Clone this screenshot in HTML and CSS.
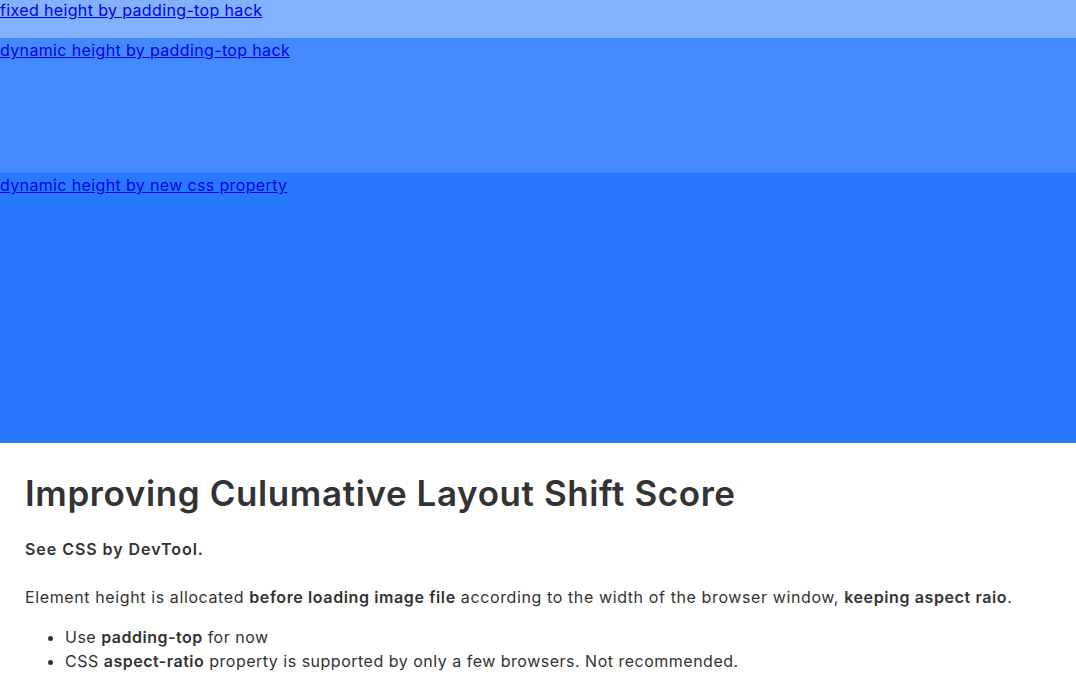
FILE: index.html
```html
<!DOCTYPE html>
<html>
<head>
<meta charset="utf-8">
<link rel="stylesheet" href="styles.css">
</head>
<body>
<div class="box box-fixed"><a href="#">fixed height by padding-top hack</a></div>
<div class="box box-dynamic"><a href="#">dynamic height by padding-top hack</a></div>
<div class="box box-new"><a href="#">dynamic height by new css property</a></div>
<main class="content">
  <h1 class="title">Improving Culumative Layout Shift Score</h1>
  <p class="lead">See CSS by DevTool.</p>
  <p class="text">Element height is allocated <b>before loading image file</b> according to the width of the browser window, <b>keeping aspect raio</b>.</p>
  <ul class="list">
    <li>Use <b>padding-top</b> for now</li>
    <li>CSS <b>aspect-ratio</b> property is supported by only a few browsers. Not recommended.</li>
  </ul>
</main>
</body>
</html>
```
FILE: styles.css
```css
html, body {
  margin: 0;
  padding: 0;
}
body {
  font-family: Inter, "Noto Sans", sans-serif;
  color: #333;
  background: #fff;
}
.box {
  font-size: 16px;
  line-height: 25px;
  letter-spacing: 0.36px;
}
.box-fixed {
  line-height: 21px;
}
.box a {
  color: #0000ee;
  text-decoration: underline;
}
.box-fixed {
  height: 38px;
  background: #82b1ff;
}
.box-dynamic {
  height: 135px;
  background: #448aff;
}
.box-new {
  height: 270px;
  background: #2979ff;
}
.content {
  padding: 0 25px;
}
.title {
  margin: 28px 0 0;
  font-size: 35px;
  line-height: 44px;
  font-weight: 600;
  letter-spacing: 0.6px;
}
.lead {
  margin: 22px 0 0;
  font-size: 16px;
  font-weight: 600;
  line-height: 24px;
  letter-spacing: 0.95px;
}
.text {
  margin: 24px 0 0;
  font-size: 16px;
  line-height: 24px;
  letter-spacing: 0.61px;
}
.text b, .list b {
  font-weight: 600;
}
.list {
  margin: 16px 0 0;
  padding-left: 40px;
  font-size: 16px;
  line-height: 24px;
  letter-spacing: 0.5px;
}
```
